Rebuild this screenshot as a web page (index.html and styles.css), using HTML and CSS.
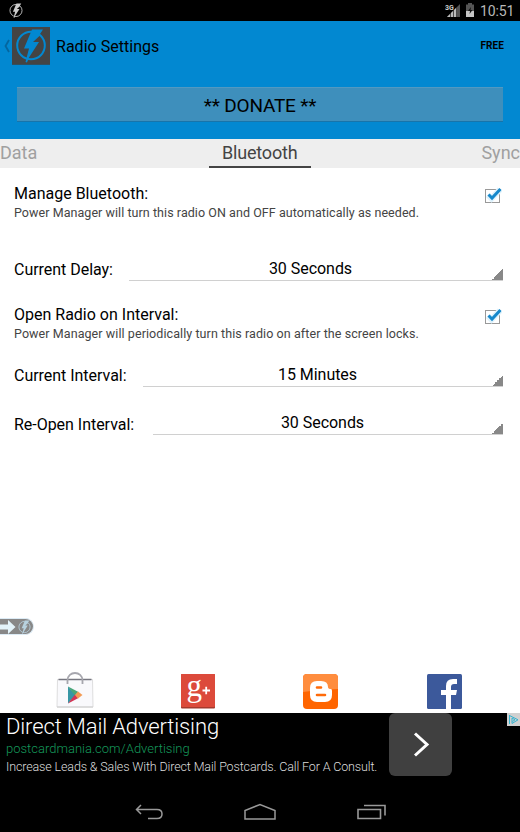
FILE: index.html
```html
<!DOCTYPE html>
<html lang="en">
<head>
<meta charset="utf-8">
<title>Radio Settings</title>
<link rel="stylesheet" href="styles.css">
</head>
<body>
<svg class="defs" width="0" height="0" aria-hidden="true">
  <symbol id="bolt" viewBox="0 0 32 34">
    <circle cx="16" cy="17" r="13.8" fill="none" stroke="currentColor" stroke-width="2"/>
    <path d="M17 1H28L24 7H25L18 13.500H24L14 29L12 34L10.500 33.500L14 20H9Z" fill="currentColor"/>
  </symbol>
  <symbol id="check" viewBox="0 0 22 22">
    <rect x="3.500" y="5.500" width="14" height="13" fill="#fff" stroke="#999"/>
    <path d="M6 11L9.500 14.500L18 5.500" fill="none" stroke="#def2fc" stroke-width="6"/>
    <path d="M6.500 10.500L10 14L18.500 5" fill="none" stroke="#1688cb" stroke-width="3"/>
  </symbol>
</svg>
<header class="status">
  <svg class="status-app"><use href="#bolt"/></svg>
  <div class="status-right">
    <svg class="signal" width="16" height="16" viewBox="0 0 16 16"><path d="M2 14L15 1V14Z" fill="#555"/><path d="M2 14L12 4V14Z" fill="#bbb"/><path d="M5.500 9V15M8.500 7V15M11.500 4V15" stroke="#000" stroke-width=".6"/><text x="0" y="6.500">3G</text></svg>
    <svg class="battery" width="10" height="14" viewBox="0 0 10 14"><path d="M3 0H7V1.500H9V8H1V1.500H3Z" fill="#555"/><path d="M1 8H9V14H1Z" fill="#c5c5c5"/><path d="M6 4L3 8H5L4.500 11L7.500 7H5.500Z" fill="#111"/></svg>
    <span class="clock">10:51</span>
  </div>
</header>
<div class="top">
  <div class="bar">
    <svg class="up" width="7" height="14" viewBox="0 0 7 14"><path d="M5 1L1.500 7L5 13" fill="none" stroke="#04669f" stroke-width="1.800"/></svg>
    <span class="logo"><svg><use href="#bolt"/></svg></span>
    <h1>Radio Settings</h1>
    <span class="free">FREE</span>
  </div>
  <button class="donate">** DONATE **</button>
</div>
<nav class="tabs">
  <span class="tab">Data</span>
  <span class="tab current">Bluetooth</span>
  <span class="tab last">Sync</span>
</nav>
<main>
  <section class="option">
    <div><h2>Manage Bluetooth:</h2><p>Power Manager will turn this radio ON and OFF automatically as needed.</p></div>
    <svg class="check"><use href="#check"/></svg>
  </section>
  <div class="field delay"><label>Current Delay:</label><div class="spinner">30 Seconds</div></div>
  <section class="option second">
    <div><h2>Open Radio on Interval:</h2><p>Power Manager will periodically turn this radio on after the screen locks.</p></div>
    <svg class="check"><use href="#check"/></svg>
  </section>
  <div class="field interval"><label>Current Interval:</label><div class="spinner">15 Minutes</div></div>
  <div class="field reopen"><label>Re-Open Interval:</label><div class="spinner">30 Seconds</div></div>
  <div class="drawer"><svg class="arrow" width="16" height="14" viewBox="0 0 16 14"><path d="M0 4.500H8V0L15.500 7L8 14V9.500H0Z" fill="#e3f3fa"/></svg><svg class="mini"><use href="#bolt"/></svg></div>
  <footer class="links">
    <svg width="38" height="38" viewBox="0 0 38 38">
      <path d="M1.500 8.500H36.500L37 36H1Z" fill="#f9f9fc" stroke="#dededf"/>
      <path d="M1 36H37" stroke="#ccc"/><path d="M2.500 8.500H35.500" stroke="#777780" stroke-width="1.500"/>
      <path d="M11.500 13V9.500C11.500-.5 26.500-.5 26.500 9.500V13" fill="none" stroke="#a7a7ae" stroke-width="1.800"/>
      <path d="M12 15.500L20 24L12 32.500Z" fill="#3796a5"/><path d="M12 15.500L22.500 21L19 24.500Z" fill="#49a678"/><path d="M12 32.500L19 23.500L22.500 27Z" fill="#d33555"/><path d="M22 20.500L26.500 24L22 27.500L19 24Z" fill="#f39a54"/>
    </svg>
    <svg class="gplus" width="34" height="36" viewBox="0 0 34 36"><rect y="1" width="34" height="34.500" rx="1" fill="#a53a2e"/><rect y="1" width="34" height="33" rx="1" fill="#dc4a3b"/><text x="5.500" y="23">g</text><path d="M21.500 17.500H29M25.200 13.800V21.200" stroke="#fff" stroke-width="1.800"/></svg>
    <svg width="35" height="36" viewBox="0 0 35 36"><rect y="1" width="35" height="35" rx="4" fill="#ff6500"/><path d="M0 19V5Q0 1 4 1H31Q35 1 35 5V16Q18 16 0 19Z" fill="#ff8d3e"/><path d="M14 8H18Q25 8 25 14Q25 16 28 16Q29 16 29 18V22Q29 29 22 29H14Q7 29 7 22V15Q7 8 14 8Z" fill="#fff"/><path d="M14 14.500H18M14 22H22" stroke="#ff6b09" stroke-width="2.600" stroke-linecap="round"/></svg>
    <svg width="35" height="36" viewBox="0 0 35 36"><rect y="1" width="35" height="35" rx="1.500" fill="#3c599b"/><path d="M19 36V22H14V17H19V13Q19 6 26 6H30V11H27Q24 11 24 14V17H30L29 22H24V36Z" fill="#fff"/></svg>
  </footer>
</main>
<aside class="ad">
  <div class="ad-copy"><div class="ad-title">Direct Mail Advertising</div><div class="ad-url">postcardmania.com/Advertising</div><div class="ad-text">Increase Leads &amp; Sales With Direct Mail Postcards. Call For A Consult.</div></div>
  <div class="ad-go"><svg width="18" height="26" viewBox="0 0 18 26"><path d="M2 1.500L14 12.500L2 23.500" fill="none" stroke="#fff" stroke-width="3"/></svg></div>
  <svg class="adchoice" width="13" height="13" viewBox="0 0 13 13"><path d="M0 0H13V13H0Z" fill="#d0d0d0"/><path d="M2.500 2V11M2.500 2.500L11 6.800L5 10.500V5L8 6.800L5.500 8.500" fill="none" stroke="#35b3d0" stroke-width="1"/></svg>
</aside>
<div class="navbar">
  <svg width="28" height="16" viewBox="0 0 28 16"><path d="M6 1L1.500 5.500L6 10M1.500 5.500H22Q27 5.500 27 10Q27 14.500 22 14.500H13" fill="none" stroke="#999" stroke-width="1.500"/></svg>
  <svg width="32" height="18" viewBox="0 0 32 18"><path d="M1 16V7.500L16 1.500L31 7.500V16Z" fill="none" stroke="#999" stroke-width="1.500"/></svg>
  <svg width="29" height="16" viewBox="0 0 29 16"><path d="M1 5.500H23.500V14.500H1ZM7 1.500H28V11.500" fill="none" stroke="#999" stroke-width="1.600"/></svg>
</div>
</body>
</html>
```

FILE: styles.css
```css
* { box-sizing: border-box; }
body { margin: 0; width: 520px; height: 832px; overflow: hidden; display: flex; flex-direction: column; background: #fff; color: #000; font-family: Roboto, sans-serif; }
h1, h2, p { margin: 0; font-weight: 400; white-space: nowrap; }
svg { display: block; flex: none; }
.defs { position: absolute; }
.status { height: 21px; background: #000; display: flex; justify-content: space-between; padding: 3px 6px 0 9px; }
.status-app { width: 14px; height: 15px; color: #ccc; }
.status-right { display: flex; color: #b8b8b8; }
.signal { margin-right: 4px; }
.signal text { font: bold 7px Roboto, sans-serif; fill: #ccc; }
.battery { margin-right: 5px; }
.clock { font-size: 14px; line-height: 17px; width: 34px; white-space: nowrap; letter-spacing: -.1px; }
.top { height: 118px; background: #0288d1; }
.bar { height: 66px; display: flex; align-items: flex-start; padding: 6px 16px 0 4px; }
.up { margin-top: 12px; }
.logo { width: 38px; height: 38px; margin-left: 1px; background: #444; padding: 1px 3px; color: #0288d1; border-bottom: 1px solid #315061; }
.logo svg { width: 32px; height: 35px; }
h1 { font-size: 16px; line-height: 39px; margin-left: 6px; letter-spacing: .03px; }
.free { margin-left: auto; font-size: 10px; font-weight: 700; line-height: 38px; letter-spacing: .1px; }
.donate { display: block; width: 486px; height: 35px; margin: 0 17px; border: 0; border-top: 1px solid #5299c1; border-bottom: 1px solid #1774aa; background: #3e8fbc; padding: 1px 0 0; color: #000; font: 19px/33px Roboto, sans-serif; letter-spacing: -.2px; }
.tabs { height: 29px; background: #eee; display: grid; grid-template-columns: 208.5px 102.5px 1fr; font-size: 18px; line-height: 27px; color: #a0a0a0; }
.current { text-align: center; color: #444; border-bottom: 2px solid #444; letter-spacing: -.2px; }
.last { text-align: right; }
main { height: 545px; padding: 16px 17px 0 14px; }
.option { display: flex; justify-content: space-between; height: 68px; }
h2, label { font-size: 16px; line-height: 20px; }
.option p { font-size: 12.5px; line-height: 17px; color: #444; letter-spacing: .06px; }
.second p { letter-spacing: .08px; }
.check { width: 22px; height: 22px; margin: 0 -1px 0 0; }
.field { display: flex; height: 29px; }
.field label { margin-top: 8px; flex: none; white-space: nowrap; letter-spacing: -.03px; }
.delay label { width: 115px; }
.interval label { width: 129px; }
.reopen label { width: 139px; margin-top: 9px; }
.spinner { flex: 1; height: 29px; border-bottom: 1px solid #d0d0d0; padding: 6px 11px 0 0; text-align: center; font-size: 16px; line-height: 22px; background: linear-gradient(135deg, transparent 50%, #888 50%) right bottom / 11px 11px no-repeat; letter-spacing: -.04px; }
.second { margin-top: 24px; height: 53px; }
.reopen { margin-top: 19px; }
.drawer { display: flex; align-items: center; width: 34px; height: 17px; margin: 183px 0 0 -14px; background: #888; border: 1px solid #dcebf5; border-left: 0; border-radius: 0 9px 9px 0; }
.mini { width: 13px; height: 14px; margin-left: 2px; color: #b8d2df; }
.links { display: flex; justify-content: space-between; align-items: flex-end; width: 406px; height: 38px; margin: 36px 0 0 42px; }
.gplus { margin-left: -2px; overflow: visible; }
.gplus text { font: 31px "Liberation Serif", serif; fill: #fff; }
.ad { height: 67px; background: #000; display: flex; }
.ad-copy { width: 389px; padding-left: 6px; white-space: nowrap; }
.ad-title { color: #fff; font-size: 22px; font-weight: 300; line-height: 27px; letter-spacing: -.13px; }
.ad-url { color: #15985b; font-size: 13px; font-weight: 300; line-height: 17px; }
.ad-text { color: #ddd; font-size: 12.5px; font-weight: 300; line-height: 19px; letter-spacing: -.135px; }
.ad-go { width: 63px; height: 63px; border-radius: 6px; background: #404040; display: grid; place-items: center; padding-left: 2px; }
.adchoice { margin-left: auto; }
.navbar { height: 52px; background: #000; display: flex; align-items: center; justify-content: space-between; padding: 12px 134px 0 135px; }
```
